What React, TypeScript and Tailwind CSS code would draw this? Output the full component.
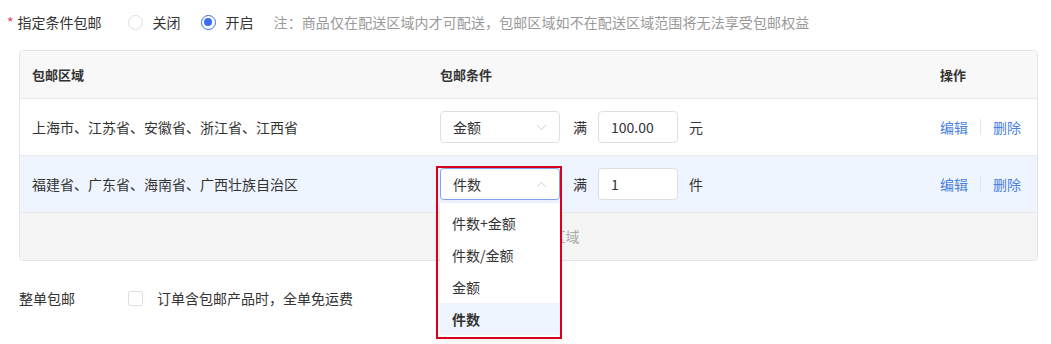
import React from 'react';
import { ChevronDown, ChevronUp, Plus } from 'lucide-react';

const rows = [
  { area: '上海市、江苏省、安徽省、浙江省、江西省', type: '金额', value: '100.00', unit: '元', open: false },
  { area: '福建省、广东省、海南省、广西壮族自治区', type: '件数', value: '1', unit: '件', open: true },
];

const options = ['件数+金额', '件数/金额', '金额', '件数'];

function Radio({ checked, label }: { checked?: boolean; label: string }) {
  return (
    <label className="flex items-center gap-[10px] cursor-pointer">
      <span
        className={`w-[15px] h-[15px] rounded-full border flex items-center justify-center bg-white ${
          checked ? 'border-[#3c6df0]' : 'border-[#dcdfe6]'
        }`}
      >
        {checked && <span className="w-[8px] h-[8px] rounded-full bg-[#3c6df0]" />}
      </span>
      <span className="text-[14px] text-[#333]">{label}</span>
    </label>
  );
}

export default function App() {
  return (
    <div
      className="w-[1051px] h-[344px] bg-white text-[#333] overflow-hidden"
      style={{ fontFamily: '"Noto Sans CJK SC", "Noto Sans", sans-serif' }}
    >
      {/* 指定条件包邮 */}
      <div className="flex items-center h-[44px] pl-[7px]">
        <span className="text-[#e5484d] text-[14px] mr-[4px]">*</span>
        <span className="text-[14px] text-[#333] w-[110px]">指定条件包邮</span>
        <Radio label="关闭" />
        <div className="w-[20px]" />
        <Radio checked label="开启" />
        <span className="ml-[20px] text-[14px] text-[#999] tracking-[0.1px]">
          注：商品仅在配送区域内才可配送，包邮区域如不在配送区域范围将无法享受包邮权益
        </span>
      </div>

      {/* table */}
      <div className="ml-[19px] mt-[6px] w-[1019px] border border-[#e6e6e6] rounded-[4px]">
        <div className="grid grid-cols-[408px_500px_1fr] h-[48px] items-center bg-[#f8f8f8] border-b border-[#e8e8e8] rounded-t-[4px] text-[13px] font-bold text-[#333]">
          <div className="px-3">包邮区域</div>
          <div className="px-3">包邮条件</div>
          <div className="px-3">操作</div>
        </div>

        {rows.map((r, i) => (
          <div
            key={i}
            className={`grid grid-cols-[408px_500px_1fr] h-[57px] items-center border-b border-[#e8e8e8] text-[14px] ${
              r.open ? 'bg-[#eff5fe]' : 'bg-white'
            }`}
          >
            <div className="px-3 text-[#333]">{r.area}</div>
            <div className="px-3 flex items-center">
              <div className="relative">
                <div
                  className={`w-[120px] h-[32px] rounded-[4px] border bg-white flex items-center justify-between pl-[12px] pr-[9px] ${
                    r.open ? 'border-[#7fa2f2]' : 'border-[#dcdfe6]'
                  }`}
                >
                  <span className="text-[#333]">{r.type}</span>
                  {r.open ? (
                    <ChevronUp size={17} strokeWidth={1} className="text-[#bbb]" />
                  ) : (
                    <ChevronDown size={17} strokeWidth={1} className="text-[#bbb]" />
                  )}
                </div>
                {r.open && (
                  <>
                    <div className="absolute left-0 top-[35px] w-[120px] bg-white py-[4px] shadow-[0_2px_8px_rgba(0,0,0,0.08)] z-10">
                      {options.map((o) => (
                        <div
                          key={o}
                          className={`h-[32px] flex items-center px-[12px] text-[14px] ${
                            o === r.type ? 'bg-[#eff5fe] font-bold text-[#333]' : 'text-[#333]'
                          }`}
                        >
                          {o}
                        </div>
                      ))}
                    </div>
                    <div className="absolute left-[-4px] top-[-2px] w-[126px] h-[173px] border-2 border-[#d7001f] z-20 pointer-events-none" />
                  </>
                )}
              </div>
              <span className="ml-[13px] text-[#333]">满</span>
              <div className="ml-[11px] w-[80px] h-[32px] rounded-[4px] border border-[#dcdfe6] bg-white flex items-center px-[12px] text-[#333]">
                {r.value}
              </div>
              <span className="ml-[11px] text-[#333]">{r.unit}</span>
            </div>
            <div className="px-3 flex items-center text-[#4a7fe3]">
              <span>编辑</span>
              <span className="mx-[12px] w-px h-[16px] bg-[#e5e5e5]" />
              <span>删除</span>
            </div>
          </div>
        ))}

        <div className="h-[47px] bg-[#f5f5f5] rounded-b-[4px] flex items-center justify-center gap-[4px] text-[14px] text-[#aaa]">
          <Plus size={14} strokeWidth={1.5} />
          <span>添加包邮区域</span>
        </div>
      </div>

      {/* 整单包邮 */}
      <div className="flex items-center h-[26px] mt-[24px] pl-[19px]">
        <span className="text-[14px] text-[#333] w-[109px]">整单包邮</span>
        <span className="w-[15px] h-[15px] rounded-[2px] border border-[#dcdfe6] bg-white" />
        <span className="ml-[14px] text-[14px] text-[#333]">订单含包邮产品时，全单免运费</span>
      </div>
    </div>
  );
}
